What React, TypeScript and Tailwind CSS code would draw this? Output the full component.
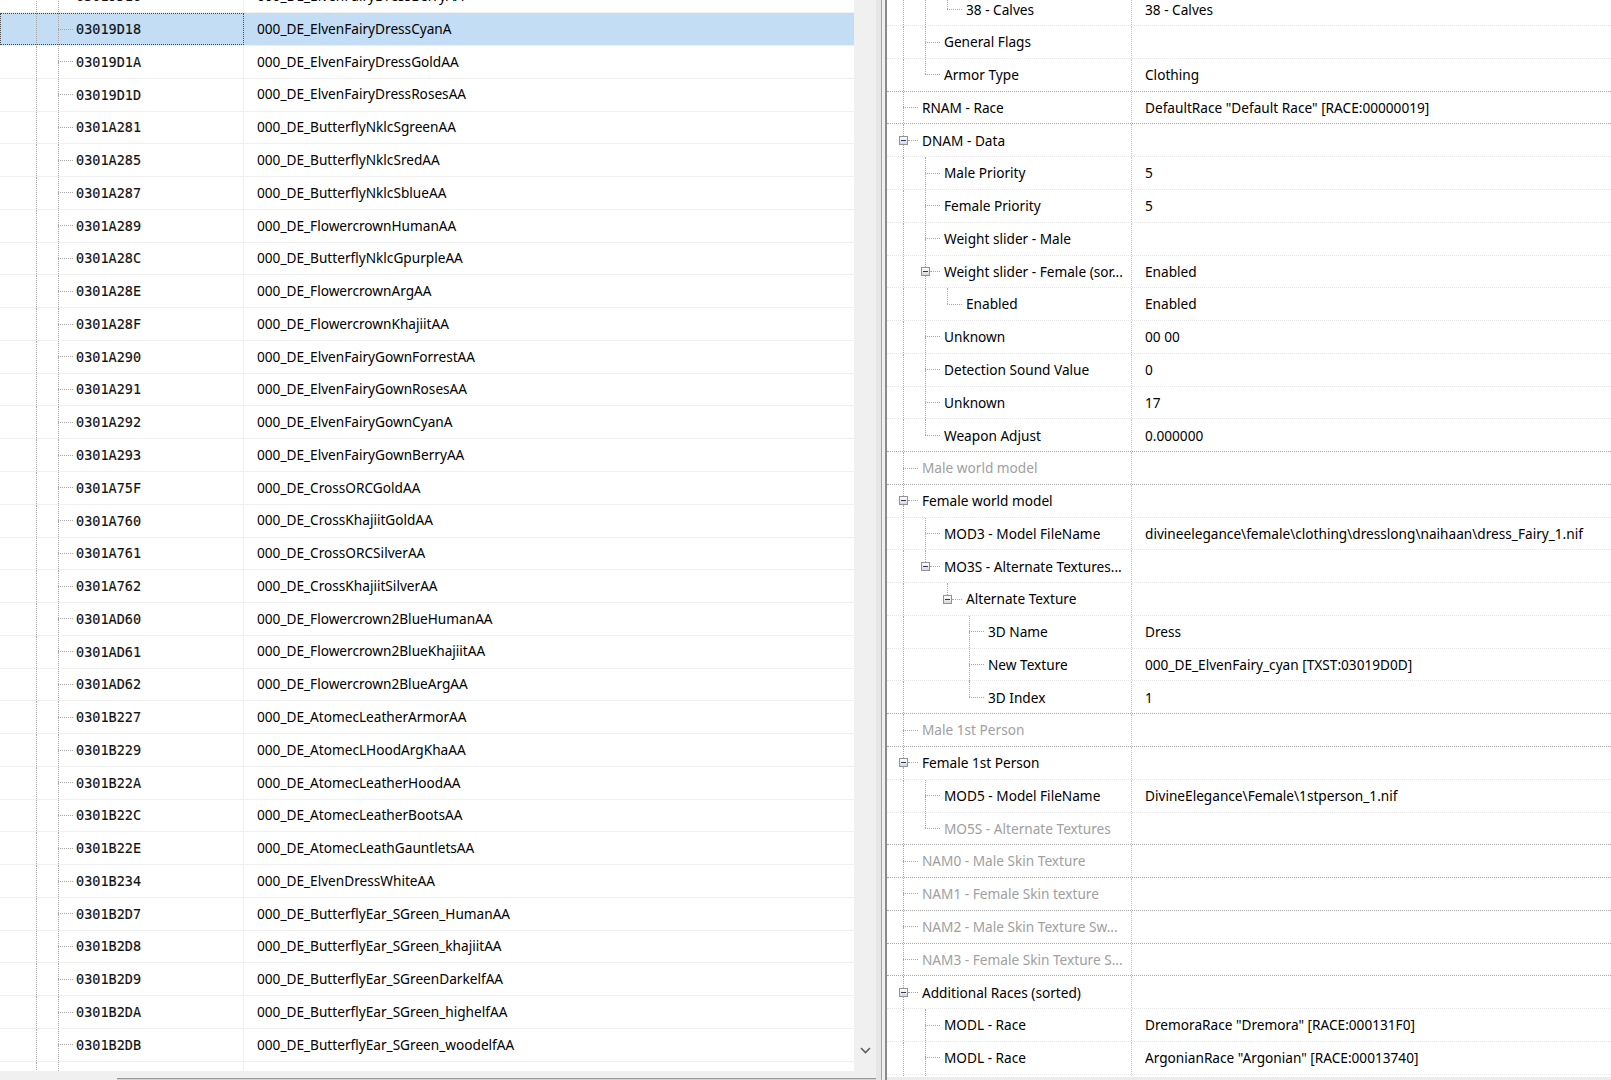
import React from "react";

// Record list (left) + element tree (right), classic Win32 tree-view look.

const records: [string, string][] = [
  ["03019D16", "000_DE_ElvenFairyDressBerryAA"],
  ["03019D18", "000_DE_ElvenFairyDressCyanA"],
  ["03019D1A", "000_DE_ElvenFairyDressGoldAA"],
  ["03019D1D", "000_DE_ElvenFairyDressRosesAA"],
  ["0301A281", "000_DE_ButterflyNklcSgreenAA"],
  ["0301A285", "000_DE_ButterflyNklcSredAA"],
  ["0301A287", "000_DE_ButterflyNklcSblueAA"],
  ["0301A289", "000_DE_FlowercrownHumanAA"],
  ["0301A28C", "000_DE_ButterflyNklcGpurpleAA"],
  ["0301A28E", "000_DE_FlowercrownArgAA"],
  ["0301A28F", "000_DE_FlowercrownKhajiitAA"],
  ["0301A290", "000_DE_ElvenFairyGownForrestAA"],
  ["0301A291", "000_DE_ElvenFairyGownRosesAA"],
  ["0301A292", "000_DE_ElvenFairyGownCyanA"],
  ["0301A293", "000_DE_ElvenFairyGownBerryAA"],
  ["0301A75F", "000_DE_CrossORCGoldAA"],
  ["0301A760", "000_DE_CrossKhajiitGoldAA"],
  ["0301A761", "000_DE_CrossORCSilverAA"],
  ["0301A762", "000_DE_CrossKhajiitSilverAA"],
  ["0301AD60", "000_DE_Flowercrown2BlueHumanAA"],
  ["0301AD61", "000_DE_Flowercrown2BlueKhajiitAA"],
  ["0301AD62", "000_DE_Flowercrown2BlueArgAA"],
  ["0301B227", "000_DE_AtomecLeatherArmorAA"],
  ["0301B229", "000_DE_AtomecLHoodArgKhaAA"],
  ["0301B22A", "000_DE_AtomecLeatherHoodAA"],
  ["0301B22C", "000_DE_AtomecLeatherBootsAA"],
  ["0301B22E", "000_DE_AtomecLeathGauntletsAA"],
  ["0301B234", "000_DE_ElvenDressWhiteAA"],
  ["0301B2D7", "000_DE_ButterflyEar_SGreen_HumanAA"],
  ["0301B2D8", "000_DE_ButterflyEar_SGreen_khajiitAA"],
  ["0301B2D9", "000_DE_ButterflyEar_SGreenDarkelfAA"],
  ["0301B2DA", "000_DE_ButterflyEar_SGreen_highelfAA"],
  ["0301B2DB", "000_DE_ButterflyEar_SGreen_woodelfAA"],
  ["", ""],
];

type Field = {
  level: number;
  label: string;
  value?: string;
  rails: number[]; // ancestor levels whose guide line runs through the row
  last?: boolean;
  open?: boolean;
  muted?: boolean;
};

const fields: Field[] = [
  { level: 3, label: "38 - Calves", value: "38 - Calves", rails: [1, 2], last: true },
  { level: 2, label: "General Flags", rails: [1] },
  { level: 2, label: "Armor Type", value: "Clothing", rails: [1], last: true },
  { level: 1, label: "RNAM - Race", value: 'DefaultRace "Default Race" [RACE:00000019]', rails: [] },
  { level: 1, label: "DNAM - Data", rails: [], open: true },
  { level: 2, label: "Male Priority", value: "5", rails: [1] },
  { level: 2, label: "Female Priority", value: "5", rails: [1] },
  { level: 2, label: "Weight slider - Male", rails: [1] },
  { level: 2, label: "Weight slider - Female (sor...", value: "Enabled", rails: [1], open: true },
  { level: 3, label: "Enabled", value: "Enabled", rails: [1, 2], last: true },
  { level: 2, label: "Unknown", value: "00 00", rails: [1] },
  { level: 2, label: "Detection Sound Value", value: "0", rails: [1] },
  { level: 2, label: "Unknown", value: "17", rails: [1] },
  { level: 2, label: "Weapon Adjust", value: "0.000000", rails: [1], last: true },
  { level: 1, label: "Male world model", rails: [], muted: true },
  { level: 1, label: "Female world model", rails: [], open: true },
  { level: 2, label: "MOD3 - Model FileName", value: "divineelegance\\female\\clothing\\dresslong\\naihaan\\dress_Fairy_1.nif", rails: [1] },
  { level: 2, label: "MO3S - Alternate Textures...", rails: [1], last: true, open: true },
  { level: 3, label: "Alternate Texture", rails: [1], last: true, open: true },
  { level: 4, label: "3D Name", value: "Dress", rails: [1] },
  { level: 4, label: "New Texture", value: "000_DE_ElvenFairy_cyan [TXST:03019D0D]", rails: [1] },
  { level: 4, label: "3D Index", value: "1", rails: [1], last: true },
  { level: 1, label: "Male 1st Person", rails: [], muted: true },
  { level: 1, label: "Female 1st Person", rails: [], open: true },
  { level: 2, label: "MOD5 - Model FileName", value: "DivineElegance\\Female\\1stperson_1.nif", rails: [1] },
  { level: 2, label: "MO5S - Alternate Textures", rails: [1], last: true, muted: true },
  { level: 1, label: "NAM0 - Male Skin Texture", rails: [], muted: true },
  { level: 1, label: "NAM1 - Female Skin texture", rails: [], muted: true },
  { level: 1, label: "NAM2 - Male Skin Texture Sw...", rails: [], muted: true },
  { level: 1, label: "NAM3 - Female Skin Texture S...", rails: [], muted: true },
  { level: 1, label: "Additional Races (sorted)", rails: [], open: true },
  { level: 2, label: "MODL - Race", value: 'DremoraRace "Dremora" [RACE:000131F0]', rails: [1] },
  { level: 2, label: "MODL - Race", value: 'ArgonianRace "Argonian" [RACE:00013740]', rails: [1] },
  { level: 2, label: "", rails: [1] },
];

const guide = "border-dotted border-[#a6a6a6]";

function Expander() {
  return (
    <div className="ml-[7px] flex h-[9px] w-[9px] shrink-0 items-center justify-center border border-[#929292] bg-linear-to-b from-white to-[#d8d8d8]">
      <div className="h-px w-[5px] bg-[#26386e]" />
    </div>
  );
}

function RecordRow({ id, name, selected }: { id: string; name: string; selected?: boolean }) {
  return (
    <div className={`flex h-[32.78px] shrink-0 border-b border-[#f0f0f0] ${selected ? "bg-[#c2ddf4]" : ""}`}>
      <div
        className={`flex w-[244px] shrink-0 items-stretch ${
          selected ? "outline-1 outline-dotted -outline-offset-1 outline-[#4a4a4a]" : "border-r border-[#f0f0f0]"
        }`}
      >
        <div className="w-[25px] shrink-0" />
        <div className="w-[22px] shrink-0">
          <div className={`ml-[11px] h-full border-l ${guide}`} />
        </div>
        <div className="flex w-[26px] shrink-0 flex-col">
          <div className={`ml-[11px] flex-1 border-l ${guide}`} />
          <div className={`ml-[11px] w-[15px] border-t ${guide}`} />
          <div className={`ml-[11px] flex-1 border-l ${guide}`} />
        </div>
        <span className="self-center pl-[3px] font-['DejaVu_Sans_Mono',monospace] text-[13.5px] text-[#111] [-webkit-text-stroke:0.15px_#111]">
          {id}
        </span>
      </div>
      <span className="self-center whitespace-nowrap pl-[13px]">{name}</span>
    </div>
  );
}

function FieldRow({ f }: { f: Field }) {
  const ancestors = [];
  for (let lvl = 1; lvl < f.level; lvl++) {
    ancestors.push(
      <div key={lvl} className="w-[22px] shrink-0">
        {f.rails.includes(lvl) && <div className={`ml-[11px] h-full border-l ${guide}`} />}
      </div>
    );
  }

  return (
    <div
      className={`flex h-[32.78px] shrink-0 border-t border-dotted ${
        f.level === 1 ? "border-[#a9a9a9]" : "border-[#e6e6e6]"
      }`}
    >
      <div className="flex w-[245px] shrink-0 items-stretch border-r border-dotted border-[#c6c6c6] pl-[5px]">
        {ancestors}
        <div className="flex w-[26px] shrink-0 flex-col">
          <div className={`ml-[11px] flex-1 border-l ${guide}`} />
          {f.open ? (
            <div className="flex h-[9px] items-center">
              <Expander />
              <div className={`w-[10px] border-t ${guide}`} />
            </div>
          ) : (
            <div className={`ml-[11px] w-[15px] border-t ${guide}`} />
          )}
          <div className={`ml-[11px] flex-1 ${f.last ? "" : `border-l ${guide}`}`} />
        </div>
        <span className={`self-center whitespace-nowrap pl-[4px] pt-px ${f.muted ? "text-[#a0a0a0]" : ""}`}>
          {f.label}
        </span>
      </div>
      <span className="self-center whitespace-nowrap pl-[13px] pt-px">{f.value}</span>
    </div>
  );
}

export default function App() {
  return (
    <div className="flex h-[1080px] w-[1611px] overflow-hidden bg-white font-['Noto_Sans',sans-serif] text-[13.65px] text-black">
      {/* record list */}
      <div className="flex w-[876px] shrink-0 flex-col">
        <div className="flex min-h-0 flex-1">
          <div className="w-[854px] shrink-0 overflow-hidden">
            <div className="-mt-[19.5px] flex flex-col">
              {records.map(([id, name], i) => (
                <RecordRow key={i} id={id} name={name} selected={i === 1} />
              ))}
            </div>
          </div>
          <div className="flex w-[22px] shrink-0 flex-col items-center justify-end bg-[#f0f0f0] pb-[17px]">
            <svg width="11" height="7" viewBox="0 0 11 7">
              <polyline points="1,1 5.5,5.5 10,1" fill="none" stroke="#606060" strokeWidth="1.6" />
            </svg>
          </div>
        </div>
        <div className="flex h-[9px] shrink-0 bg-[#f0f0f0]">
          <div className="ml-[117px] mt-[7px] flex-1 border-t border-[#9a9a9a] bg-[#d4d4d4]" />
        </div>
      </div>

      {/* splitter */}
      <div className="flex w-[11px] shrink-0">
        <div className="w-[5px] bg-[#e6e6e6]" />
        <div className="w-px bg-[#a2a2a2]" />
        <div className="w-[3px] bg-[#f0f0f0]" />
        <div className="w-[2px] bg-[#8a8a8a]" />
      </div>

      {/* element tree */}
      <div className="flex min-w-0 flex-1 flex-col">
        <div className="min-h-0 flex-1 overflow-hidden">
          <div className="-mt-[7.6px] flex flex-col">
            {fields.map((f, i) => (
              <FieldRow key={i} f={f} />
            ))}
          </div>
        </div>
        <div className="h-[3px] shrink-0 bg-[#ececec]" />
      </div>
    </div>
  );
}
